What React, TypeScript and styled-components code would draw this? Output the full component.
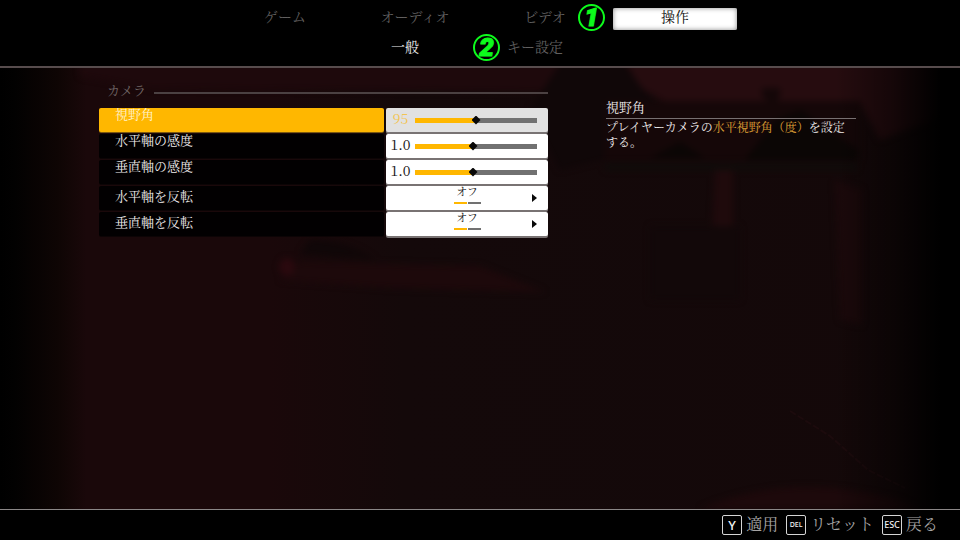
import React, { useState } from "react";
import styled, { createGlobalStyle } from "styled-components";

const serif = '"Noto Serif CJK JP", "Liberation Serif", "Noto Sans CJK JP", serif';
const sans = 'Roboto, "Open Sans", sans-serif';

const GlobalStyle = createGlobalStyle`
  * { box-sizing: border-box; }
  body { margin: 0; background: #000; font-family: ${serif}; }
  button { margin: 0; padding: 0; border: 0; background: none; font: inherit; color: inherit; cursor: pointer; }
`;

const Page = styled.div`
  display: flex;
  flex-direction: column;
  min-height: 100vh;
  background: #000;
  font-size: 14px;
  font-weight: 400;
  line-height: 20px;
  color: #f0ecec;
`;

const Header = styled.header`
  display: flex;
  flex-direction: column;
  align-items: center;
  gap: 8px;
  padding: 8px 0 6px;
  border-bottom: 2px solid #574c4d;
`;

const TabRow = styled.nav<{ $shift?: boolean }>`
  display: flex;
  justify-content: center;
  gap: 6px;
  padding-right: ${(p) => (p.$shift ? "20px" : "0")};
`;

const Tab = styled.button<{ $look?: "filled" | "bright" }>`
  position: relative;
  width: 124px;
  height: 22px;
  border-radius: 2px;
  && {
    padding-bottom: 5px;
    line-height: 17px;
    color: ${(p) => (p.$look === "filled" ? "#111" : p.$look === "bright" ? "#eee" : "#626060")};
    background: ${(p) => (p.$look === "filled" ? "#fff" : "transparent")};
  }
  box-shadow: ${(p) => (p.$look === "filled" ? "inset 0 0 5px #8a8a8a" : "none")};
`;

const Marker = styled.span<{ $left: number; $top: number }>`
  position: absolute;
  left: ${(p) => p.$left}px;
  top: ${(p) => p.$top}px;
  display: grid;
  place-items: center;
  width: 27px;
  height: 27px;
  border: 2px solid #0dfb1c;
  border-radius: 50%;
  font: italic 900 26px/23px ${sans};
  color: #0dfb1c;
  -webkit-text-stroke: 1px #0dfb1c;
`;

const Main = styled.main`
  flex: 1;
  position: relative;
  display: grid;
  grid-template-columns: minmax(0, 449fr) minmax(0, 250fr);
  align-items: start;
  gap: 58px;
  padding: 12px 104px 12px 99px;
  background: #16080a;
`;

const Scene = styled.svg`
  position: absolute;
  inset: 0;
  width: 100%;
  height: 100%;
`;

const Settings = styled.section`
  position: relative;
`;

const GroupTitle = styled.h2`
  display: flex;
  align-items: center;
  gap: 8px;
  margin: 0 0 8px;
  padding-left: 8px;
  font-size: 13px;
  font-weight: 400;
  line-height: 20px;
  color: #6f6464;
  &::after {
    content: "";
    flex: 1;
    height: 2px;
    margin-top: 5px;
    background: #4b4142;
  }
`;

const Rows = styled.div`
  display: grid;
  gap: 2px;
`;

const Row = styled.div`
  display: grid;
  grid-template-columns: minmax(0, 285fr) minmax(0, 162fr);
  gap: 2px;
  height: 24px;
`;

const Label = styled.label<{ $active?: boolean; $centered?: boolean }>`
  display: flex;
  align-items: flex-start;
  padding-left: 16px;
  border-radius: 2px;
  font-size: 13px;
  line-height: ${(p) => (p.$centered ? "20px" : "12px")};
  color: ${(p) => (p.$active ? "#fff3cf" : "#f0ecec")};
  background: ${(p) => (p.$active ? "#ffb700" : "#020001")};
  box-shadow: 0 1px 0 ${(p) => (p.$active ? "#7d5a10" : "#0c0405")};
`;

const Control = styled.div<{ $active?: boolean }>`
  display: flex;
  align-items: center;
  border-radius: 2px;
  color: ${(p) => (p.$active ? "#f3c452" : "#111")};
  background: ${(p) => (p.$active ? "#e1e1e1" : "#fff")};
  box-shadow: 0 2px 0 #797373;
`;

const Value = styled.output`
  width: 29px;
  padding-bottom: 4px;
  font-size: 14px;
  line-height: 20px;
  text-align: center;
`;

const Range = styled.input`
  appearance: none;
  flex: 1;
  min-width: 0;
  height: 10px;
  margin: 0 11px 0 0;
  background: linear-gradient(90deg, #ffb700 var(--fill), #717171 var(--fill)) center / 100% 5px no-repeat;
  &::-webkit-slider-thumb {
    appearance: none;
    width: 9px;
    height: 9px;
    background: #080808;
    clip-path: polygon(50% 0, 100% 50%, 50% 100%, 0 50%);
  }
`;

const Toggle = styled.button`
  display: grid;
  grid-template-columns: 1fr auto 1fr;
  align-items: center;
  border-radius: 2px;
  box-shadow: 0 2px 0 #797373;
  && {
    background: #fff;
    color: #111;
  }
`;

const Option = styled.span`
  grid-column: 2;
  align-self: start;
  display: grid;
  justify-items: center;
  gap: 5px;
  font-size: 11px;
  line-height: 11px;
`;

const Pips = styled.span`
  display: flex;
  gap: 1px;
`;

const Pip = styled.span<{ $on?: boolean }>`
  width: 13px;
  height: 2px;
  background: ${(p) => (p.$on ? "#ffb700" : "#717171")};
`;

const Arrow = styled.svg`
  justify-self: end;
  margin-right: 11px;
`;

const Help = styled.aside`
  position: relative;
  margin-top: 18px;
`;

const HelpTitle = styled.h3`
  margin: 0;
  padding-bottom: 2px;
  font-size: 13px;
  font-weight: 400;
  line-height: 18px;
  border-bottom: 1px solid #777071;
`;

const HelpText = styled.p`
  margin: 0;
  font-size: 12px;
  line-height: 15px;
`;

const Accent = styled.em`
  font-style: normal;
  color: #e0a436;
`;

const Footer = styled.footer`
  display: flex;
  justify-content: flex-end;
  gap: 8px;
  height: 31px;
  padding: 3px 22px 0 0;
  border-top: 1px solid #8b8787;
`;

const Action = styled.button`
  && {
    display: flex;
    gap: 4px;
    height: 24px;
    font-size: 16px;
    line-height: 22px;
    color: #a6a4a4;
  }
`;

const Key = styled.kbd<{ $size: number }>`
  display: grid;
  place-items: center;
  width: 20px;
  height: 20px;
  margin-top: 2px;
  border: 1px solid #d5d5d5;
  border-radius: 2px;
  font: 500 ${(p) => p.$size}px/18px "Noto Sans", sans-serif;
  color: #f2f2f2;
`;

function Backdrop() {
  return (
    <Scene viewBox="0 68 960 441" preserveAspectRatio="none" aria-hidden="true">
      <defs>
        <linearGradient id="tint" x1="0" x2="1" y1="0" y2="0">
          <stop offset="0" stopColor="#000" />
          <stop offset="0.015" stopColor="#020101" />
          <stop offset="0.06" stopColor="#0e0504" />
          <stop offset="0.09" stopColor="#1a080a" />
          <stop offset="0.28" stopColor="#1a080a" />
          <stop offset="0.42" stopColor="#14090a" />
          <stop offset="1" stopColor="#140809" />
        </linearGradient>
        <linearGradient id="edges" x1="0" x2="1" y1="0" y2="0">
          <stop offset="0.87" stopColor="#000" stopOpacity="0" />
          <stop offset="0.93" stopColor="#000" stopOpacity="0.45" />
          <stop offset="0.98" stopColor="#000" />
        </linearGradient>
        <filter id="soft" x="-20%" y="-20%" width="140%" height="140%" colorInterpolationFilters="sRGB">
          <feGaussianBlur stdDeviation="3" />
        </filter>
      </defs>
      <rect y="68" width="960" height="441" fill="url(#tint)" />
      <g filter="url(#soft)">
        <path d="M80 60H570L545 92 150 88 80 76Z" fill="#1e090c" />
        <path d="M624 60H960V110L880 140 860 102H665L640 88Z" fill="#260c0f" />
        <path d="M562 60H622L642 88 664 112 640 150 560 170 530 110Z" fill="#100708" />
        <path d="M605 101H860V160H605Z" fill="#150708" />
        <path d="M745 160L775 120 800 110 858 150V160Z" fill="#0b0605" />
        <path d="M650 158L680 142 705 158Z" fill="#0b0605" />
        <path d="M715 166L733 170V234H712Z" fill="#1f0a0c" />
        <path d="M762 88H780V96L774 106 762 96Z" fill="#140708" />
        <path d="M605 164H857V170H605Z" fill="#0f0c0a" />
        <path d="M300 262L480 266 545 292 390 288 280 280Z" fill="#1d090b" />
        <ellipse cx="287" cy="267" rx="8" ry="9" fill="#2a090e" />
        <path d="M310 240Q350 240 375 260L300 254Z" fill="#100708" />
        <path d="M650 226H740V300H650Z" fill="#120809" />
        <path d="M835 180L862 190V325L840 320Z" fill="#1b090b" />
        <path d="M700 509Q790 470 900 500L920 509Z" fill="#1d090b" />
      </g>
      <path d="M790 411L830 436 868 470 905 488" fill="none" stroke="#1c0b0d" strokeWidth="2" strokeDasharray="7 2" />
      <rect y="68" width="960" height="441" fill="url(#edges)" />
    </Scene>
  );
}

type SliderProps = {
  id: string;
  label: string;
  min: number;
  max: number;
  step: number;
  start: number;
  digits: number;
  active?: boolean;
};

function SliderRow({ id, label, min, max, step, start, digits, active }: SliderProps) {
  const [value, setValue] = useState(start);
  const fill = `${((value - min) / (max - min)) * 100}%`;
  return (
    <Row>
      <Label htmlFor={id} $active={active}>{label}</Label>
      <Control $active={active}>
        <Value htmlFor={id}>{value.toFixed(digits)}</Value>
        <Range
          id={id}
          type="range"
          min={min}
          max={max}
          step={step}
          value={value}
          onChange={(e) => setValue(Number(e.target.value))}
          style={{ "--fill": fill } as React.CSSProperties}
        />
      </Control>
    </Row>
  );
}

function ToggleRow({ id, label }: { id: string; label: string }) {
  const [on, setOn] = useState(false);
  return (
    <Row>
      <Label htmlFor={id} $centered>{label}</Label>
      <Toggle id={id} type="button" aria-pressed={on} onClick={() => setOn(!on)}>
        <Option>
          {on ? "オン" : "オフ"}
          <Pips><Pip $on={!on} /><Pip $on={on} /></Pips>
        </Option>
        <Arrow width="5" height="8" viewBox="0 0 5 8" aria-hidden="true">
          <path d="M0 0L5 4 0 8Z" fill="#080808" />
        </Arrow>
      </Toggle>
    </Row>
  );
}

export default function App() {
  return (
    <Page>
      <GlobalStyle />
      <Header>
        <TabRow>
          <Tab>ゲーム</Tab>
          <Tab>オーディオ</Tab>
          <Tab>ビデオ</Tab>
          <Tab $look="filled">操作<Marker $left={-35} $top={-4}>1</Marker></Tab>
        </TabRow>
        <TabRow $shift>
          <Tab $look="bright">一般</Tab>
          <Tab>キー設定<Marker $left={0} $top={-4}>2</Marker></Tab>
        </TabRow>
      </Header>
      <Main>
        <Backdrop />
        <Settings>
          <GroupTitle>カメラ</GroupTitle>
          <Rows>
            <SliderRow id="fov" label="視野角" min={80} max={110} step={1} start={95} digits={0} active />
            <SliderRow id="sens-x" label="水平軸の感度" min={0.1} max={2} step={0.1} start={1} digits={1} />
            <SliderRow id="sens-y" label="垂直軸の感度" min={0.1} max={2} step={0.1} start={1} digits={1} />
            <ToggleRow id="invert-x" label="水平軸を反転" />
            <ToggleRow id="invert-y" label="垂直軸を反転" />
          </Rows>
        </Settings>
        <Help>
          <HelpTitle>視野角</HelpTitle>
          <HelpText>プレイヤーカメラの<Accent>水平視野角（度）</Accent>を設定する。</HelpText>
        </Help>
      </Main>
      <Footer>
        <Action><Key $size={13}>Y</Key>適用</Action>
        <Action><Key $size={7}>DEL</Key>リセット</Action>
        <Action><Key $size={9}>ESC</Key>戻る</Action>
      </Footer>
    </Page>
  );
}
